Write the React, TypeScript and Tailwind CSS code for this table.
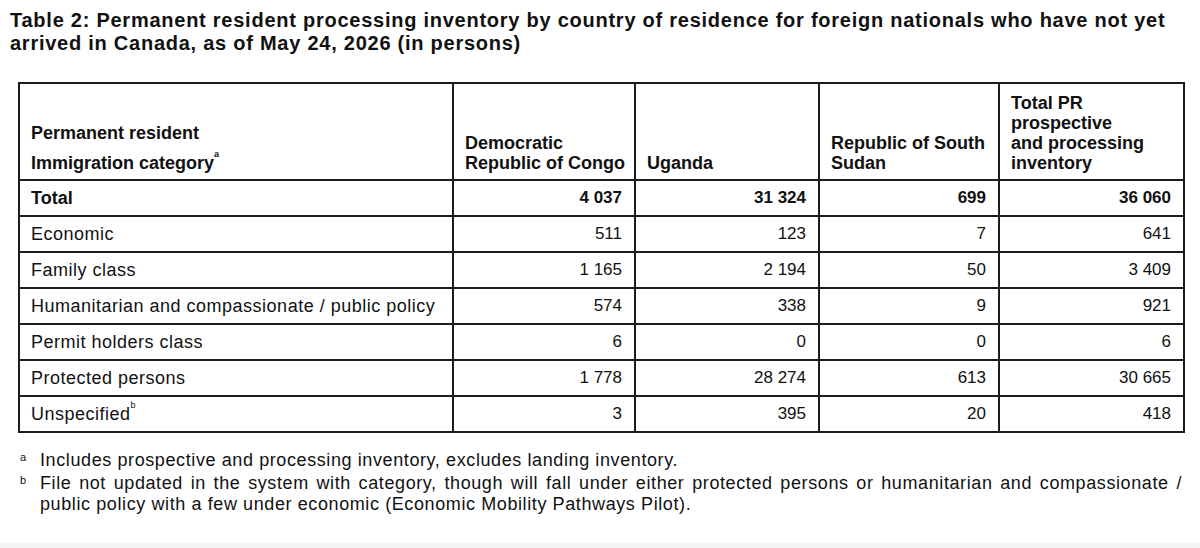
import React from 'react';

type Row = { label: string; sup?: string; values: string[]; bold?: boolean };

const rows: Row[] = [
  { label: 'Total', values: ['4 037', '31 324', '699', '36 060'], bold: true },
  { label: 'Economic', values: ['511', '123', '7', '641'] },
  { label: 'Family class', values: ['1 165', '2 194', '50', '3 409'] },
  { label: 'Humanitarian and compassionate / public policy', values: ['574', '338', '9', '921'] },
  { label: 'Permit holders class', values: ['6', '0', '0', '6'] },
  { label: 'Protected persons', values: ['1 778', '28 274', '613', '30 665'] },
  { label: 'Unspecified', sup: 'b', values: ['3', '395', '20', '418'] },
];

const cell = 'border-2 border-[#1c1c1c] pl-[11px] pr-3';

export default function App() {
  return (
    <div className="w-[1200px] h-[548px] bg-white text-[#111] font-['Liberation_Sans',Arial,sans-serif] flex flex-col overflow-hidden">
      <h1 className="px-[10px] pt-[9px] text-[20px] leading-[23px] font-bold tracking-[0.75px]">
        Table 2: Permanent resident processing inventory by country of residence for foreign nationals who have not yet
        arrived in Canada, as of May 24, 2026 (in persons)
      </h1>

      <table className="ml-[18px] mt-[27px] w-[1165px] border-collapse table-fixed text-[18px]">
        <colgroup>
          <col className="w-[434px]" />
          <col className="w-[182px]" />
          <col className="w-[184px]" />
          <col className="w-[180px]" />
          <col className="w-[185px]" />
        </colgroup>
        <thead>
          <tr className="h-[97px] font-bold text-left align-bottom whitespace-nowrap">
            <th className={`${cell} pb-[6px] font-bold`}>
              <div className="leading-[20px]">Permanent resident</div>
              <div className="mt-[10px] leading-[20px]">
                Immigration category<sup className="text-[9px] align-top relative top-[1px]">a</sup>
              </div>
            </th>
            <th className={`${cell} pl-[10px] pb-[6px] font-bold leading-[20px]`}>
              Democratic
              <br />
              Republic of Congo
            </th>
            <th className={`${cell} pb-[6px] font-bold leading-[20px]`}>Uganda</th>
            <th className={`${cell} pl-[10px] pb-[6px] font-bold leading-[20px]`}>
              Republic of South
              <br />
              Sudan
            </th>
            <th className={`${cell} pb-[6px] font-bold leading-[20px]`}>
              Total PR
              <br />
              prospective
              <br />
              and processing
              <br />
              inventory
            </th>
          </tr>
        </thead>
        <tbody>
          {rows.map((r) => (
            <tr key={r.label} className={`h-[36px] ${r.bold ? 'font-bold' : ''}`}>
              <td className={`${cell} leading-[20px] whitespace-nowrap ${r.bold ? '' : 'tracking-[0.5px]'}`}>
                {r.label}
                {r.sup && <sup className="text-[9px] align-top relative top-[1px]">{r.sup}</sup>}
              </td>
              {r.values.map((v, i) => (
                <td key={i} className={`${cell} text-right leading-[20px] text-[17px]`}>
                  {v}
                </td>
              ))}
            </tr>
          ))}
        </tbody>
      </table>

      <div className="mt-[17px] pl-[20px] pr-[18px] text-[18px] leading-[21px] tracking-[0.6px] flex flex-col gap-[2px]">
        <div className="flex">
          <span className="w-[20px] shrink-0 text-[11px] leading-[14px] tracking-normal">a</span>
          <p>Includes prospective and processing inventory, excludes landing inventory.</p>
        </div>
        <div className="flex">
          <span className="w-[20px] shrink-0 text-[11px] leading-[14px] tracking-normal">b</span>
          <p className="text-justify">
            File not updated in the system with category, though will fall under either protected persons or humanitarian and compassionate / public policy with a few under economic (Economic Mobility Pathways Pilot).
          </p>
        </div>
      </div>

      <div className="mt-auto h-[5px] bg-[#f5f5f5]" />
    </div>
  );
}
